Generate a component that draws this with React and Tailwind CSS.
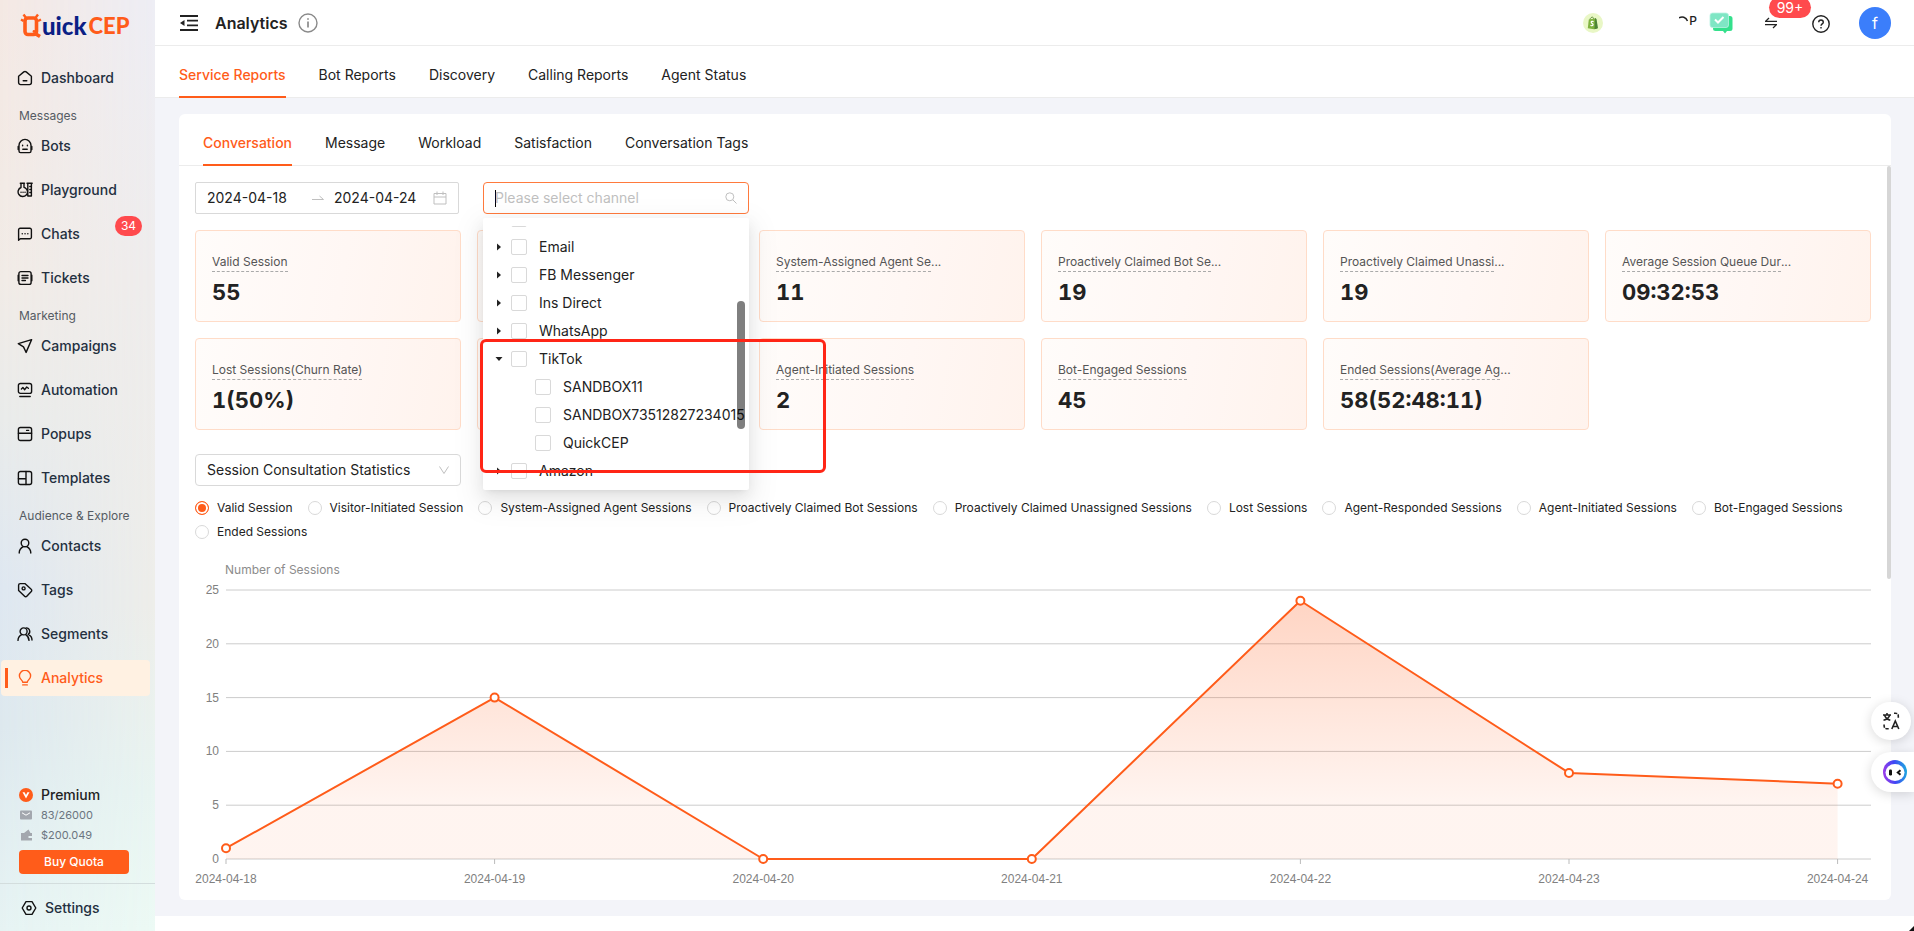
import { Fragment } from "react";

const stroke = {
  fill: "none",
  stroke: "currentColor",
  strokeWidth: 1.4,
  strokeLinecap: "round",
  strokeLinejoin: "round",
};

function Icon({ children, className = "size-4" }) {
  return (
    <svg viewBox="0 0 16 16" className={className} aria-hidden="true" {...stroke}>
      {children}
    </svg>
  );
}

const icons = {
  dashboard: (
    <>
      <path d="M1.6 6.2 6.800 1.900a1.900 1.900 0 0 1 2.400 0l5.200 4.300v6.400a2 2 0 0 1-2 2H3.600a2 2 0 0 1-2-2z" />
      <path d="M6.200 10.800h3.600" />
    </>
  ),
  bots: (
    <>
      <path d="M2 7.400a6 6 0 0 1 12 0v5.600a1.600 1.600 0 0 1-1.600 1.600H3.600A1.600 1.600 0 0 1 2 13z" />
      <path d="M5.600 7.200v.6M10.400 7.200v.6M5.800 11.300h4.400M1.200 8.500v3M14.800 8.500v3" />
    </>
  ),
  playground: (
    <>
      <path d="M3.300 1.200h4.200M4 1.200v4.300a4.700 4.700 0 1 0 4.200.3L7 5.300V1.200M10 1.200h5.200M10.800 1.200v12.800h3.600V1.200M12.800 4.500h1.600M12.800 7.500h1.600M12.800 10.500h1.600" />
      <path d="M4 10.200h.1M6 10.200h.1M8 10.200h.1" />
    </>
  ),
  chats: (
    <>
      <path d="M1.600 14.200V3.700A1.500 1.500 0 0 1 3.100 2.200h9.800a1.500 1.500 0 0 1 1.500 1.500v7.600a1.500 1.500 0 0 1-1.500 1.500H3.400z" />
      <path d="M5.200 7.700h.1M8 7.700h.1M10.800 7.700h.1" />
    </>
  ),
  tickets: (
    <>
      <rect x="1.900" y="1.600" width="12.200" height="12.800" rx="2" />
      <path d="M5 5.500h6M5 8h6M5 10.500h3.400M1.200 5.200v5.600M14.800 5.200v5.600" />
    </>
  ),
  campaigns: <path d="M14.600 1.600 1.300 5.600l5.200 3.300 2.600 5.500z" />,
  automation: (
    <>
      <rect x="1.400" y="1.500" width="13.200" height="9.900" rx="2" />
      <path d="m4.400 7 1.500-1.500 1.800 2.200 2-2.700 1.700 1.300M2.800 14.500h10.400" />
    </>
  ),
  popups: (
    <>
      <rect x="1.400" y="1.500" width="13.200" height="13" rx="2" />
      <path d="M1.400 7.300h13.200M9.600 4.400h2" />
    </>
  ),
  templates: (
    <>
      <rect x="1.400" y="1.500" width="13.200" height="13" rx="2" />
      <path d="M9 1.500v13M1.400 8.700H9" />
    </>
  ),
  contacts: (
    <>
      <circle cx="8" cy="5" r="3.800" />
      <path d="M2.200 15c0-3 1.700-5 4-6.300M13.800 15c0-3-1.700-5-4-6.300" />
    </>
  ),
  tags: (
    <>
      <path d="M1.600 3.300a1.700 1.700 0 0 1 1.700-1.700h4.600l6.300 5.700a1.500 1.500 0 0 1 .1 2.200l-4.500 4.700a1.500 1.500 0 0 1-2.200 0L1.600 8.400z" />
      <circle cx="6.600" cy="6.400" r="1.500" />
    </>
  ),
  segments: (
    <>
      <circle cx="6.600" cy="5.400" r="3.500" />
      <path d="M1 14.400c0-2.700 1.600-4.500 3.600-5.700M12 14.400c0-2.700-1.400-4.500-3.300-5.700M9.200 1.900a3.500 3.500 0 0 1 2 6.400c2.300 1.100 3.800 3 3.800 5.700" />
    </>
  ),
  analytics: (
    <path d="M5.700 12.200c0-2-3.300-3-3.300-6.300a5.600 5.600 0 0 1 11.200 0c0 3.300-3.300 4.300-3.300 6.300zM5.700 14.900h4.600" />
  ),
};

const nav = [
  { items: [["dashboard", "Dashboard"]] },
  {
    title: "Messages",
    items: [["bots", "Bots"], ["playground", "Playground"], ["chats", "Chats", "34"], ["tickets", "Tickets"]],
  },
  {
    title: "Marketing",
    items: [["campaigns", "Campaigns"], ["automation", "Automation"], ["popups", "Popups"], ["templates", "Templates"]],
  },
  {
    title: "Audience & Explore",
    items: [["contacts", "Contacts"], ["tags", "Tags"], ["segments", "Segments"], ["analytics", "Analytics"]],
  },
];

function Logo() {
  return (
    <a href="#" className="mt-3 ml-5 flex h-7 items-center" aria-label="QuickCEP">
      <svg viewBox="0 0 22 26" className="h-[26px] w-[22px]" aria-hidden="true">
        <path
          d="M5 8v10.500a3 3 0 0 0 3 3h5.500a3 3 0 0 0 3-3V8a3 3 0 0 0-3-3H8a3 3 0 0 0-3 3zM15 20.500l5 3"
          fill="none"
          stroke="#ff5c1a"
          strokeWidth="3.600"
        />
        <path d="M1 6.500 3.600 8M3.500 1.500l2.800 3.800M18 1.500l-2.800 3.800M21 6.500 18 8" stroke="#ff5c1a" strokeWidth="2.400" />
        <circle cx="14" cy="18.500" r="1.400" fill="#ff5c1a" />
      </svg>
      <span className="font-[Lato,sans-serif] text-2xl leading-7 font-black text-[#0b1f85]">uick</span>
      <span className="ml-0.5 font-[Lato,sans-serif] text-[22px] leading-7 font-black text-[#ff5c1a]">CEP</span>
    </a>
  );
}

function Sidebar() {
  return (
    <aside className="relative flex w-[155px] shrink-0 flex-col bg-[linear-gradient(180deg,#eeeef5_0%,#efeded_30%,#eeeeea_65%,#e9f5f2_85%,#edfaf5_100%)]">
      <div className="absolute inset-0 bg-[linear-gradient(180deg,#f4e8e3_0%,#f1ebe6_30%,#e9ebea_45%,#dee7f1_63%,#dde8ee_78%,#e6f3f3_100%)] [mask-image:linear-gradient(90deg,black,transparent)]" />
      <div className="relative flex flex-1 flex-col">
        <Logo />
        <nav className="mt-5 flex flex-col pl-px pr-[5px]">
          {nav.map((group, i) => (
            <Fragment key={i}>
              {group.title && (
                <h2 className="h-6 pl-[18px] text-xs leading-6 text-[#555b63]">{group.title}</h2>
              )}
              {group.items.map(([icon, label, badge]) => {
                const active = icon === "analytics";
                return (
                  <a
                    key={icon}
                    href="#"
                    aria-current={active ? "page" : undefined}
                    className={
                      active
                        ? "relative mb-2 flex h-9 items-center gap-2 rounded bg-[#fff1e2] pl-4 text-sm font-medium text-[#ff5c1a]"
                        : "relative mb-2 flex h-9 items-center gap-2 rounded pl-4 text-sm font-medium text-[#24303f]"
                    }
                  >
                    {active && <span className="absolute left-1 h-5 w-[3px] bg-[#ff5c1a]" />}
                    <span className={active ? "text-[#ff5c1a]" : "text-[#111]"}>
                      <Icon>{icons[icon]}</Icon>
                    </span>
                    {label}
                    {badge && (
                      <span className="absolute right-2 top-0 h-5 w-[27px] rounded-full bg-[#ff4a4d] text-center text-xs leading-5 font-normal text-white">
                        {badge}
                      </span>
                    )}
                  </a>
                );
              })}
            </Fragment>
          ))}
        </nav>
        <div className="mt-auto flex flex-col pl-[19px] pr-[26px]">
          <div className="flex h-5 items-center gap-2 text-sm font-medium text-[#222]">
            <svg viewBox="0 0 14 14" className="size-3.5" aria-hidden="true">
              <circle cx="7" cy="7" r="7" fill="#ff5c1a" />
              <path d="M3.500 4.200 7 10.600l3.500-6.400H8.400L7 7 5.600 4.200z" fill="#fff" />
            </svg>
            Premium
          </div>
          <div className="flex h-5 items-center gap-2 text-[11px] text-[#6b7580]">
            <svg viewBox="0 0 14 14" className="size-3.5" aria-hidden="true">
              <rect x="1" y="2.500" width="12" height="9" rx="1" fill="#a3a7ae" />
              <path d="m3 4.800 4 2.400 4-2.400" fill="none" stroke="#fff" />
            </svg>
            83/26000
          </div>
          <div className="flex h-5 items-center gap-2 text-[11px] text-[#6b7580]">
            <svg viewBox="0 0 14 14" className="size-3.5" aria-hidden="true">
              <path d="M2 5h3l4.500-3.500L11.500 5h1.500v3H9.500v2H13v2.500H2z" fill="#a3a7ae" />
            </svg>
            $200.049
          </div>
          <button type="button" className="mt-[5px] h-6 rounded bg-[#ff5c1a] text-xs font-medium text-white">
            Buy Quota
          </button>
        </div>
        <a
          href="#"
          className="mt-[9px] flex h-12 items-center gap-2 border-t border-[#d3dddd] pl-[21px] text-sm font-medium text-[#24303f]"
        >
          <Icon className="size-4 text-[#111]">
            <path d="M5 1.600h6L14.800 8 11 14.400H5L1.200 8z" />
            <circle cx="8" cy="8" r="2" />
          </Icon>
          Settings
        </a>
      </div>
    </aside>
  );
}

function Header() {
  return (
    <header className="flex h-[46px] items-center border-b border-[#ececec] bg-white pl-6 pr-[23px]">
      <button type="button" aria-label="Collapse menu">
        <svg viewBox="0 0 20 18" className="h-[18px] w-5" fill="none" stroke="#222" strokeWidth="1.800" aria-hidden="true">
          <path d="M1 2h18M8 6.700h11M8 11.300h11M1 16h18" />
          <path d="M5.500 6v6L1 9z" fill="#222" stroke="none" />
        </svg>
      </button>
      <h1 className="ml-4 text-base font-semibold text-[#222]">Analytics</h1>
      <button type="button" aria-label="About this page" className="ml-2.5 text-[#8a8a8a]">
        <svg viewBox="0 0 20 20" className="size-5" fill="none" stroke="currentColor" strokeWidth="1.400" aria-hidden="true">
          <circle cx="10" cy="10" r="9" />
          <path d="M10 8.500v6M10 5.300v1.500" strokeWidth="1.700" />
        </svg>
      </button>
      <div className="ml-auto flex items-center">
        <svg viewBox="0 0 20 20" className="size-5" role="img" aria-label="Shopify">
          <circle cx="10" cy="10" r="10" fill="#e9f7c6" />
          <path d="m5.800 6.500 7-1.300L14 15.500l-3 .7-6.200-1z" fill="#7fb23f" />
          <path d="m12 5 1.500 1 1.500 9.200-3.500 1z" fill="#4d8437" />
          <path d="M7 6.500c.3-2.200 3.300-3.500 3.600-.8" fill="none" stroke="#5f8f3c" />
          <path d="M10.600 8.600c-1.200-.6-2.600-.3-2.400.8s2 1 1.900 2.300-1.600 1.200-2.600.6" fill="none" stroke="#fff" strokeWidth="1.200" />
        </svg>
        <div className="ml-[76px] flex items-center pb-1">
          <svg viewBox="0 0 10 10" className="size-2.5 text-[#222]" fill="none" stroke="currentColor" strokeWidth="1.500" aria-hidden="true">
            <path d="M0 2C3 0 7 1 8.500 5" />
          </svg>
          <span className="text-xs leading-4 font-medium text-[#222]">P</span>
        </div>
        <svg viewBox="0 0 24 22" className="ml-3 h-[22px] w-6" role="img" aria-label="Messages">
          <path d="M6 4h15a2.500 2.500 0 0 1 2.500 2.500v10A2.500 2.500 0 0 1 21 19h-3l-2 2.500-2-2.500H6.500A2.500 2.500 0 0 1 4 16.500z" fill="#34e08c" />
          <rect x="1" y="1" width="18.500" height="14.500" rx="2.500" fill="#7fe6c4" stroke="#b9f2e2" strokeWidth=".8" />
          <path d="m6 7.500 3 3 5.500-5.500" fill="none" stroke="#fff" strokeWidth="2" />
        </svg>
        <button type="button" aria-label="Pending transfers, 99+" className="relative ml-8">
          <svg viewBox="0 0 12 12" className="size-3" fill="none" stroke="#222" strokeWidth="1.300" aria-hidden="true">
            <path d="M12 4.300H.5L4 1M0 7.700h11.500L8 11" />
          </svg>
          <span className="absolute -top-5 left-1 h-[21px] w-[42px] rounded-full bg-[#ff4a4d] text-center text-sm leading-[22px] text-white">
            99+
          </span>
        </button>
        <button type="button" aria-label="Help" className="ml-[35px] mt-0.5">
          <svg viewBox="0 0 18 18" className="size-[18px]" fill="none" stroke="#222" strokeWidth="1.400" aria-hidden="true">
            <circle cx="9" cy="9" r="8.200" />
            <path d="M6.700 7.200c0-3 4.600-3 4.600 0 0 1.700-2.300 1.700-2.300 3.500M9 12v1.500" />
          </svg>
        </button>
        <button type="button" aria-label="Account" className="ml-[29px] size-8 rounded-full bg-[#3b7efb] text-base text-white">
          f
        </button>
      </div>
    </header>
  );
}

function Tabs({ tabs, className }) {
  return (
    <div role="tablist" className={className}>
      {tabs.map((tab, i) => (
        <button
          key={tab}
          type="button"
          role="tab"
          aria-selected={i === 0}
          className={
            i === 0
              ? "-mb-px border-b-2 border-[#ff5c1a] text-sm font-medium text-[#ff5c1a]"
              : "-mb-px border-b-2 border-transparent text-sm text-[#222]"
          }
        >
          {tab}
        </button>
      ))}
    </div>
  );
}

const box = "m-0 size-4 shrink-0 appearance-none rounded-xs border border-[#d9d9d9] bg-white";

function TreeRow({ label, open, leaf, id }) {
  return (
    <li className="flex h-7 items-center">
      {leaf ? (
        <span className="w-12 shrink-0" />
      ) : (
        <button type="button" aria-label={"Toggle " + label} className="flex w-6 shrink-0 justify-center">
          <svg viewBox="0 0 8 8" className="size-2 text-[#222]" fill="currentColor" aria-hidden="true">
            {open ? <path d="M.5 2h7L4 6z" /> : <path d="M2 .5v7L6 4z" />}
          </svg>
        </button>
      )}
      <input id={id} type="checkbox" className={box} />
      <label htmlFor={id} className="ml-3 text-sm whitespace-nowrap text-[#222]">
        {label}
      </label>
    </li>
  );
}

function ChannelSelect() {
  return (
    <div className="relative w-[266px]">
      <div className="flex h-8 items-center rounded border border-[#ff7a3d] bg-white px-[11px]">
        <span className="-mr-px h-[17px] w-px bg-black" />
        <input
          type="text"
          aria-label="Channel"
          placeholder="Please select channel"
          className="min-w-0 flex-1 text-sm outline-none placeholder:text-[#bfbfbf]"
        />
        <svg viewBox="0 0 12 12" className="size-3 text-[#bfbfbf]" fill="none" stroke="currentColor" aria-hidden="true">
          <circle cx="4.800" cy="4.800" r="4" />
          <path d="m7.700 7.700 3.800 3.800" />
        </svg>
      </div>
      <div className="absolute inset-x-0 top-9 z-10 rounded-xs bg-white px-1 py-2 shadow-[0_3px_6px_-4px_rgba(0,0,0,0.12),0_6px_16px_rgba(0,0,0,0.08),0_9px_28px_8px_rgba(0,0,0,0.05)]">
        <div className="relative h-64 overflow-hidden">
          <ul className="-mt-[21px]">
            <li className="flex h-7 items-center pl-6">
              <input type="checkbox" aria-label="Channel" className={box} />
            </li>
            <TreeRow id="ch-email" label="Email" />
            <TreeRow id="ch-fb" label="FB Messenger" />
            <TreeRow id="ch-ins" label="Ins Direct" />
            <TreeRow id="ch-whatsapp" label="WhatsApp" />
            <TreeRow id="ch-tiktok" label="TikTok" open />
            <TreeRow id="ch-tt-1" label="SANDBOX11" leaf />
            <TreeRow id="ch-tt-2" label="SANDBOX73512827234015" leaf />
            <TreeRow id="ch-tt-3" label="QuickCEP" leaf />
            <TreeRow id="ch-amazon" label="Amazon" />
          </ul>
          <div className="absolute top-[75px] right-0 h-32 w-2 rounded-full bg-black/50" />
        </div>
      </div>
      <div className="pointer-events-none absolute top-[157px] -left-[3px] z-20 h-[134px] w-[346px] rounded-md border-3 border-[#ff2516]" />
    </div>
  );
}

function DateRange() {
  return (
    <div className="flex h-8 w-[264px] items-center rounded-xs border border-[#d9d9d9] bg-white px-[11px]">
      <input aria-label="Start date" defaultValue="2024-04-18" className="w-[105px] text-sm text-[#222] outline-none" />
      <svg viewBox="0 0 12 12" className="size-3 shrink-0 text-[#bfbfbf]" fill="none" stroke="currentColor" aria-hidden="true">
        <path d="M0 7.500h11.500L7.500 4" />
      </svg>
      <input aria-label="End date" defaultValue="2024-04-24" className="ml-2.5 min-w-0 flex-1 text-sm text-[#222] outline-none" />
      <svg viewBox="0 0 14 14" className="size-3.5 shrink-0 text-[#bfbfbf]" fill="none" stroke="currentColor" aria-hidden="true">
        <path d="M1 2.500h12v10.500H1zM1 6h12M4 .500v3.500M10 .500v3.500" />
      </svg>
    </div>
  );
}

const metrics = [
  { label: "Valid Session", value: "55" },
  {},
  { label: "System-Assigned Agent Se", cut: true, value: "11" },
  { label: "Proactively Claimed Bot Se", cut: true, value: "19" },
  { label: "Proactively Claimed Unassi", cut: true, value: "19" },
  { label: "Average Session Queue Dur", cut: true, value: "09:32:53" },
  { label: "Lost Sessions(Churn Rate)", value: "1(50%)" },
  {},
  { label: "Agent-Initiated Sessions", value: "2" },
  { label: "Bot-Engaged Sessions", value: "45" },
  { label: "Ended Sessions(Average Ag", cut: true, value: "58(52:48:11)" },
];

function MetricCard({ label, cut, value }) {
  return (
    <div className="h-[92px] rounded border border-[#ffdcc8] bg-[linear-gradient(100deg,#fffcfa_0%,#fff7f4_55%,#fff3ed_100%)] px-4 pt-[22px]">
      {label && (
        <>
          <p className="flex text-xs leading-[18px] whitespace-nowrap text-[#555]">
            <span className="border-b border-dashed border-[#aaa]">{label}</span>
            {cut && "..."}
          </p>
          <p className="mt-1.5 text-[22px] leading-7 font-bold whitespace-nowrap text-[#222] tabular-nums">{value}</p>
        </>
      )}
    </div>
  );
}

const series = [
  "Valid Session",
  "Visitor-Initiated Session",
  "System-Assigned Agent Sessions",
  "Proactively Claimed Bot Sessions",
  "Proactively Claimed Unassigned Sessions",
  "Lost Sessions",
  "Agent-Responded Sessions",
  "Agent-Initiated Sessions",
  "Bot-Engaged Sessions",
  "Ended Sessions",
];

const points = [
  ["2024-04-18", 1],
  ["2024-04-19", 15],
  ["2024-04-20", 0],
  ["2024-04-21", 0],
  ["2024-04-22", 24],
  ["2024-04-23", 8],
  ["2024-04-24", 7],
];

const chartX = (i) => 31 + i * 268.600;
const chartY = (v) => 299 - v * 10.760;

function Chart() {
  const line = points.map(([, v], i) => chartX(i) + "," + chartY(v)).join(" ");
  const area = chartX(0) + "," + chartY(0) + " " + line + " " + chartX(6) + "," + chartY(0);
  return (
    <svg
      viewBox="0 0 1676 324"
      className="mt-4 block h-auto w-full overflow-visible font-['Liberation_Sans',sans-serif] text-xs"
      role="img"
      aria-label="Number of Sessions"
    >
      <defs>
        <linearGradient id="area" x1="0" y1="0" x2="0" y2="1">
          <stop offset="0" stopColor="#ff5c1a" stopOpacity="0.260" />
          <stop offset="0.780" stopColor="#ff5c1a" stopOpacity="0.065" />
          <stop offset="1" stopColor="#ff5c1a" stopOpacity="0.065" />
        </linearGradient>
      </defs>
      <text x="30" y="14" fill="#8c8c8c" className="font-[Inter,sans-serif]">
        Number of Sessions
      </text>
      {[25, 20, 15, 10, 5, 0].map((v) => (
        <g key={v}>
          <path d={"M31 " + chartY(v) + "H1676"} stroke="#ccc" />
          <text x="24" y={chartY(v) + 4} textAnchor="end" fill="#808080">
            {v}
          </text>
        </g>
      ))}
      <polygon points={area} fill="url(#area)" />
      <polyline points={line} fill="none" stroke="#ff5c1a" strokeWidth="2" strokeLinejoin="round" />
      {points.map(([date, v], i) => (
        <g key={date}>
          <path d={"M" + chartX(i) + " 299v5"} stroke="#bbb" />
          <circle cx={chartX(i)} cy={chartY(v)} r="4" fill="#fff" stroke="#ff5c1a" strokeWidth="2" />
          <text x={chartX(i)} y="323" textAnchor="middle" fill="#808080">
            {date}
          </text>
        </g>
      ))}
    </svg>
  );
}

function FloatingTools() {
  return (
    <div className="fixed top-[702px] right-0 z-30 flex flex-col gap-3">
      <button
        type="button"
        aria-label="Translate"
        className="flex h-[38px] w-10 items-center justify-center rounded-full bg-white text-[#222] shadow-[0_2px_12px_rgba(0,0,0,0.15)]"
      >
        <svg viewBox="0 0 18 18" className="size-[18px]" fill="none" stroke="currentColor" strokeWidth="1.600" aria-hidden="true">
          <path d="M1 3h8M5 1v2M2.500 3c.8 2.500 3 4.500 5.800 5.300M7.800 3C7 5.500 4.500 7.500 1.500 8.300" />
          <path d="m9.800 17 3.500-8 3.500 8M11 14.500h4.600" />
          <path d="M12 1.200h1.300q3 0 3 3v1.500M6.700 16.800H5.300q-3.200 0-3.200-3.200v-2" strokeDasharray="3.200 1.200" />
        </svg>
      </button>
      <button
        type="button"
        aria-label="Assistant"
        className="flex h-10 w-[43px] items-center justify-center rounded-l-full bg-white pl-1 shadow-[0_2px_12px_rgba(0,0,0,0.15)]"
      >
        <svg viewBox="0 0 24 24" className="size-6" aria-hidden="true">
          <defs>
            <linearGradient id="ring" x1="0" y1="0.700" x2="1" y2="0.600">
              <stop offset="0" stopColor="#a03be8" />
              <stop offset="0.500" stopColor="#3f46f5" />
              <stop offset="1" stopColor="#1fa6e0" />
            </linearGradient>
          </defs>
          <circle cx="12" cy="12" r="12" fill="url(#ring)" />
          <ellipse cx="12" cy="12.500" rx="9.500" ry="8.500" fill="#fff" />
          <rect x="6" y="9.500" width="3" height="6" rx="1.200" fill="#111" />
          <path d="M17.500 10.200 14.800 12.500l2.700 2.300" fill="none" stroke="#111" strokeWidth="2" />
        </svg>
      </button>
    </div>
  );
}

export default function App() {
  return (
    <div className="flex min-h-screen bg-white font-[Inter,'Noto_Sans',sans-serif]">
      <Sidebar />
      <main className="flex min-w-0 flex-1 flex-col">
        <Header />
        <Tabs
          className="flex h-[52px] gap-[33px] border-b border-[#ececec] bg-white pt-2 pl-6"
          tabs={["Service Reports", "Bot Reports", "Discovery", "Calling Reports", "Agent Status"]}
        />
        <div className="bg-[#f3f4f9] py-4 pr-[23px] pl-6">
          <section className="relative rounded-md bg-white pb-4">
            <Tabs
              className="flex h-[52px] gap-[33px] border-b border-[#ececec] pt-2 pl-6"
              tabs={["Conversation", "Message", "Workload", "Satisfaction", "Conversation Tags"]}
            />
            <div className="absolute top-[52px] right-0 h-[413px] w-1 rounded-full bg-[#d6d6d6]" />
            <div className="flex flex-col pt-4 pr-5 pl-4">
              <div className="flex gap-6">
                <DateRange />
                <ChannelSelect />
              </div>
              <div className="mt-4 grid grid-cols-6 gap-4">
                {metrics.map((m, i) => (
                  <MetricCard key={i} {...m} />
                ))}
              </div>
              <div className="relative mt-6 w-[266px]">
                <select
                  aria-label="Statistics"
                  className="h-8 w-full appearance-none rounded border border-[#d9d9d9] bg-white px-[11px] text-sm text-[#222]"
                >
                  <option>Session Consultation Statistics</option>
                </select>
                <svg
                  viewBox="0 0 12 12"
                  className="pointer-events-none absolute top-2.5 right-[11px] size-3 text-[#bfbfbf]"
                  fill="none"
                  stroke="currentColor"
                  aria-hidden="true"
                >
                  <path d="M1.500 2.500 6 9.500l4.500-7" />
                </svg>
              </div>
              <div role="radiogroup" aria-label="Series" className="mt-2.5 flex flex-wrap gap-x-[15px]">
                {series.map((s, i) => (
                  <label key={s} className="flex h-6 items-center gap-2 text-xs text-[#222]">
                    <input
                      type="radio"
                      name="series"
                      defaultChecked={i === 0}
                      className="m-0 size-3.5 appearance-none rounded-full border border-[#d9d9d9] bg-white checked:border-[#ff5c1a] checked:bg-[#ff5c1a] checked:shadow-[inset_0_0_0_2px_white]"
                    />
                    {s}
                  </label>
                ))}
              </div>
              <Chart />
            </div>
          </section>
        </div>
      </main>
      <FloatingTools />
      <svg viewBox="0 0 5 5" className="fixed right-0 bottom-0 size-[5px]" aria-hidden="true">
        <path d="M5 0v5H0z" fill="#111" />
      </svg>
    </div>
  );
}
